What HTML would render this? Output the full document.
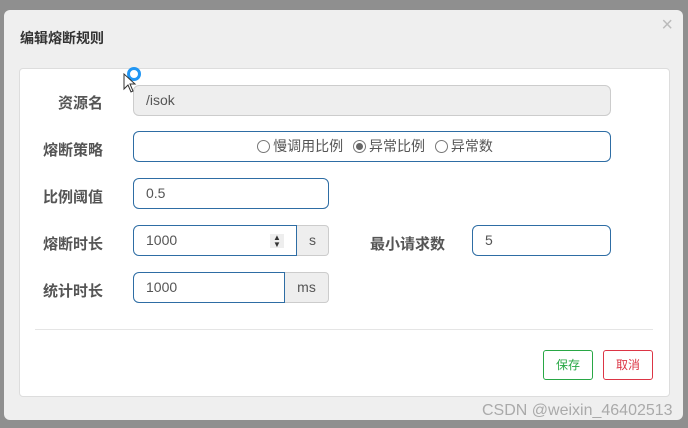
<!DOCTYPE html>
<html><head><meta charset="utf-8"><style>
body{margin:0;width:688px;height:428px;background:#8f8f8f;position:relative;overflow:hidden;font-family:"Liberation Sans","Noto Sans CJK SC",sans-serif;}
.modal{position:absolute;left:4px;top:10px;width:679px;height:410px;background:#efefef;border-radius:6px;}
.abs{position:absolute;}
.title{left:16px;top:18px;font-size:14px;font-weight:bold;color:#333;}
.x{right:10px;top:4px;font-size:20px;color:#bbb;}
.card{left:15px;top:58px;width:649px;height:327px;background:#fff;border:1px solid #ddd;border-radius:4px;}
.lbl{font-size:15px;font-weight:bold;color:#555;text-align:right;width:80px;}
.inp{box-sizing:border-box;border:1px solid #2e6da4;border-radius:6px;background:#fff;font-size:14px;color:#555;padding-left:12px;line-height:29px;}
.add{box-sizing:border-box;border:1px solid #ccc;border-left:none;border-radius:0 4px 4px 0;background:#eee;font-size:14px;color:#555;text-align:center;line-height:29px;}
.radio{display:inline-block;width:11px;height:11px;border:1px solid #777;border-radius:50%;vertical-align:-2px;margin:0 3px 0 6px;position:relative;}
.btn{box-sizing:border-box;width:50px;height:30px;border-radius:3px;font-size:12px;text-align:center;line-height:28px;background:#fff;}
</style></head><body>
<div class="modal">
<div class="abs title">编辑熔断规则</div>
<div class="abs x">×</div>
<div class="abs card"></div>
</div>
<div class="abs lbl" style="left:23px;top:92px">资源名</div>
<div class="abs inp" style="left:133px;top:85px;width:478px;height:31px;background:#eee;border-color:#ccc">/isok</div>
<div class="abs lbl" style="left:23px;top:139px">熔断策略</div>
<div class="abs inp" style="left:133px;top:131px;width:478px;height:31px;text-align:center;font-size:14px;padding-left:0"><span class="radio"></span>慢调用比例 <span class="radio"><span style="position:absolute;left:2px;top:2px;width:7px;height:7px;border-radius:50%;background:#666"></span></span>异常比例 <span class="radio"></span>异常数</div>
<div class="abs lbl" style="left:23px;top:186px">比例阈值</div>
<div class="abs inp" style="left:133px;top:178px;width:196px;height:31px">0.5</div>
<div class="abs lbl" style="left:23px;top:233px">熔断时长</div>
<div class="abs inp" style="left:133px;top:225px;width:164px;height:31px;border-radius:6px 0 0 6px">1000<span style="position:absolute;right:12px;top:8px;width:14px;height:14px;background:#eee;font-size:8px;line-height:7px;text-align:center;color:#333">▲<br>▼</span></div>
<div class="abs add" style="left:297px;top:225px;width:32px;height:31px">s</div>
<div class="abs lbl" style="left:363px;top:233px;width:82px">最小请求数</div>
<div class="abs inp" style="left:472px;top:225px;width:139px;height:31px">5</div>
<div class="abs lbl" style="left:23px;top:280px">统计时长</div>
<div class="abs inp" style="left:133px;top:272px;width:152px;height:31px;border-radius:6px 0 0 6px">1000</div>
<div class="abs add" style="left:285px;top:272px;width:44px;height:31px">ms</div>
<div class="abs" style="left:35px;top:329px;width:618px;height:1px;background:#e5e5e5"></div>
<div class="abs btn" style="left:543px;top:350px;border:1px solid #28a745;color:#28a745">保存</div>
<div class="abs btn" style="left:603px;top:350px;border:1px solid #dc3545;color:#dc3545">取消</div>
<div class="abs" style="left:482px;top:402px;font-size:16px;color:#aaa">CSDN @weixin_46402513</div>
<div class="abs" style="left:127px;top:67px;width:8px;height:8px;border:3px solid #2196f3;border-radius:50%;background:#fff"></div>
<svg class="abs" style="left:123px;top:73px" width="14" height="20" viewBox="0 0 14 20"><path d="M1 1 L1 16 L5 12 L8 19 L10 18 L7 11 L12 11 Z" fill="#fff" stroke="#333" stroke-width="1"/></svg>
</body></html>
